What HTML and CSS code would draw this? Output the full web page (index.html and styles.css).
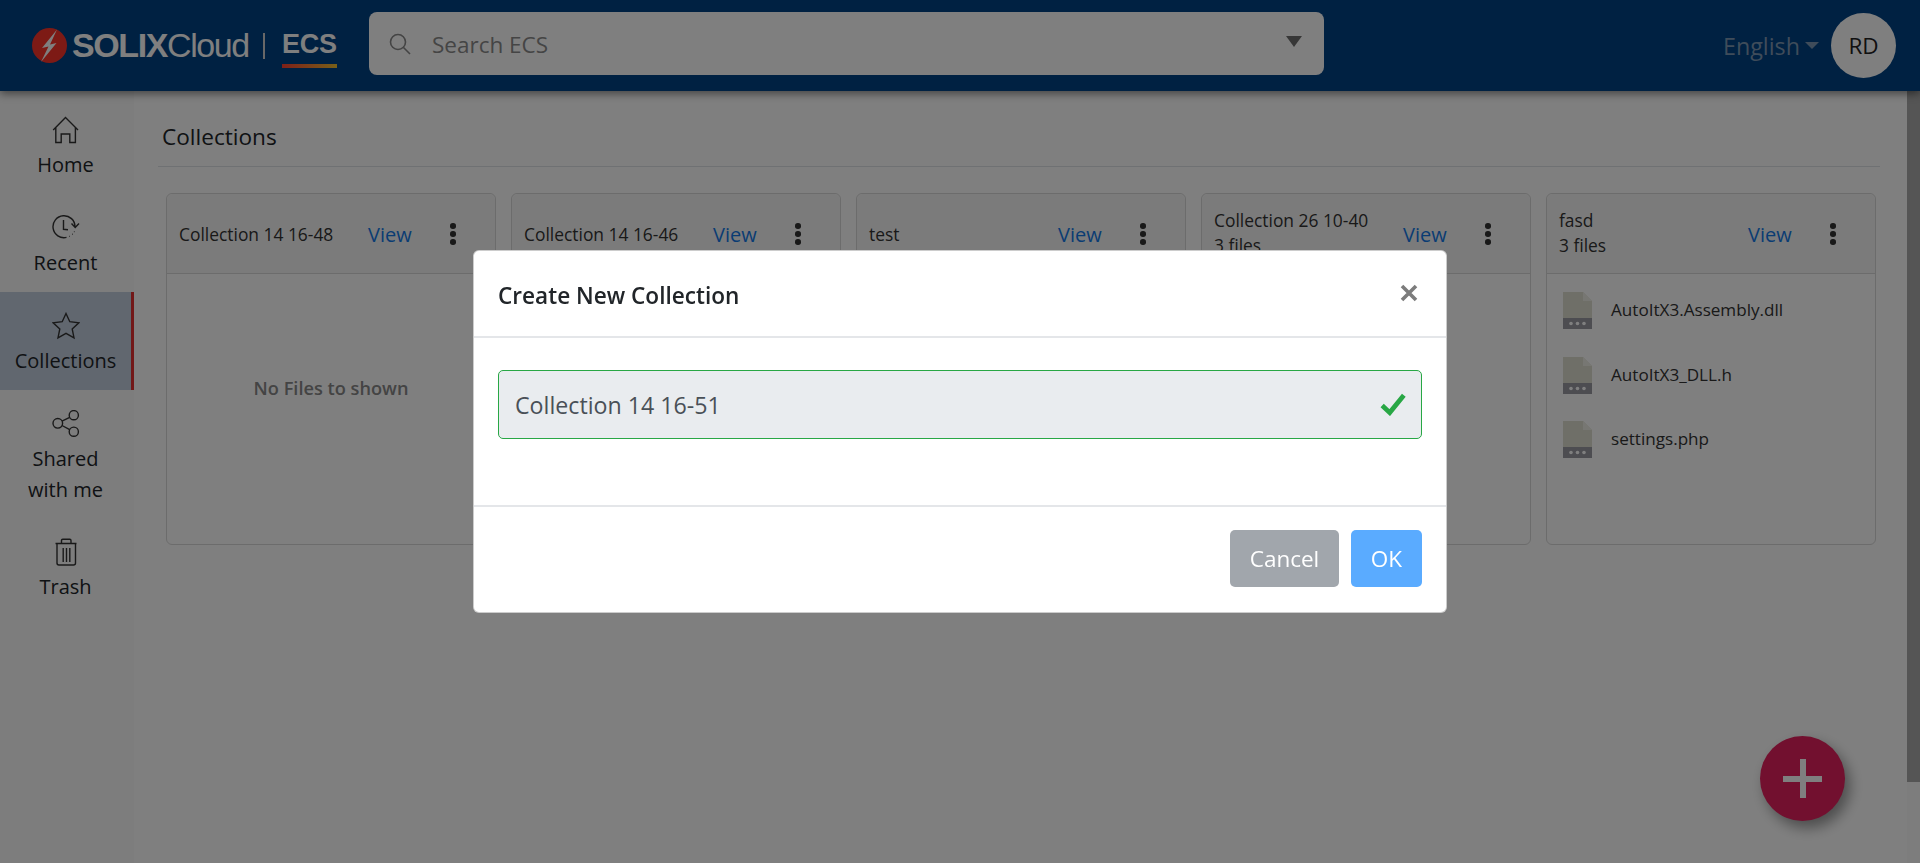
FILE: index.html
```html
<!DOCTYPE html>
<html lang="en">
<head>
    <meta charset="UTF-8">
    <title>Collections</title>
    <link rel="stylesheet" href="styles.css">
</head>
<body>
    <header class="topbar">
        <a class="logo">
            <svg class="logo-mark" viewBox="0 0 35 35">
                <circle cx="17.5" cy="17.5" r="17.5" fill="#fb342a"/>
                <path d="M25 1.5 L10 20 L16.5 18.5 L9 34 L24.5 15 L18 16.5 Z" fill="#fff"/>
            </svg>
            <span class="logo-solix">SOLIX</span><span class="logo-cloud">Cloud</span>
            <span class="logo-sep"></span>
            <span class="logo-ecs">ECS</span>
        </a>
        <div class="search">
            <svg class="search-icon" viewBox="0 0 22 22">
                <circle cx="9" cy="9" r="7.5"/>
                <line x1="14.5" y1="14.5" x2="21" y2="21"/>
            </svg>
            <span class="search-text">Search ECS</span>
            <span class="search-caret"></span>
        </div>
        <div class="lang">English<span class="lang-caret"></span></div>
        <div class="avatar">RD</div>
    </header>

    <div class="layout">
        <nav class="sidebar">
            <a class="nav-item">
                <svg viewBox="0 0 28 28"><path d="M1.2 14 L13.5 1.5 L26 14 M3.8 11.5 V26.5 H9.2 V18 H17.8 V26.5 H23.4 V11.5"/></svg>
                <span>Home</span>
            </a>
            <a class="nav-item">
                <svg viewBox="0 0 28 28"><path d="M14.5 23.4 A11 11 0 1 1 23 12.7 M19.5 9.5 L23.2 13.5 L27 9.5 M11.5 6 V15.3 L16 15.8 M17.3 22.4 h.6 M20 20.2 h.6 M21.9 17.6 h.6"/></svg>
                <span>Recent</span>
            </a>
            <a class="nav-item active">
                <svg viewBox="0 0 28 28"><path d="M14 1.5 L17.8 9.7 L26.8 10.8 L20.2 16.9 L22 25.8 L14 21.4 L6 25.8 L7.8 16.9 L1.2 10.8 L10.2 9.7 Z"/></svg>
                <span>Collections</span>
            </a>
            <a class="nav-item nav-item-tall">
                <svg viewBox="0 0 28 28">
                    <circle cx="5.8" cy="13.3" r="4.8"/><circle cx="21.8" cy="5.2" r="4.6"/><circle cx="21.8" cy="21.7" r="4.6"/>
                    <path d="M10 11.2 L17.7 7.3 M10 15.5 L17.7 19.6"/>
                </svg>
                <span>Shared<br>with me</span>
            </a>
            <a class="nav-item">
                <svg viewBox="0 0 28 28"><path d="M3.5 5.5 H24.5 M9.5 5 V2.5 Q9.5 1.2 10.8 1.2 H17.8 Q19 1.2 19 2.5 V5 M5 5.5 V25 Q5 27 7 27 H21.5 Q23.5 27 23.5 25 V5.5 M11.2 10 V24 M14.5 10 V24 M17.8 10 V24"/></svg>
                <span>Trash</span>
            </a>
        </nav>

        <main class="content">
            <h1 class="page-title">Collections</h1>
            <div class="cards">
                <section class="card">
                    <div class="card-head">
                        <div class="card-name">Collection 14 16-48</div>
                        <a class="card-view">View</a>
                        <span class="dots"><i></i><i></i><i></i></span>
                    </div>
                    <div class="card-empty">No Files to shown</div>
                </section>
                <section class="card">
                    <div class="card-head">
                        <div class="card-name">Collection 14 16-46</div>
                        <a class="card-view">View</a>
                        <span class="dots"><i></i><i></i><i></i></span>
                    </div>
                </section>
                <section class="card">
                    <div class="card-head">
                        <div class="card-name">test</div>
                        <a class="card-view">View</a>
                        <span class="dots"><i></i><i></i><i></i></span>
                    </div>
                </section>
                <section class="card">
                    <div class="card-head">
                        <div class="card-name two-line">Collection 26 10-40<br>3 files</div>
                        <a class="card-view">View</a>
                        <span class="dots"><i></i><i></i><i></i></span>
                    </div>
                </section>
                <section class="card">
                    <div class="card-head">
                        <div class="card-name two-line">fasd<br>3 files</div>
                        <a class="card-view">View</a>
                        <span class="dots"><i></i><i></i><i></i></span>
                    </div>
                    <ul class="files">
                        <li>
                            <svg viewBox="0 0 29 37">
                                <path d="M0 0 H20 L29 9 V26 H0 Z" fill="#dfdfd1"/>
                                <path d="M20 0 L29 9 H20 Z" fill="#efefe6"/>
                                <rect y="26" width="29" height="11" fill="#9a9aa3"/>
                                <circle cx="8" cy="31.5" r="1.8" fill="#fff"/><circle cx="14.5" cy="31.5" r="1.8" fill="#fff"/><circle cx="21" cy="31.5" r="1.8" fill="#fff"/>
                            </svg>
                            <span>AutoItX3.Assembly.dll</span>
                        </li>
                        <li>
                            <svg viewBox="0 0 29 37">
                                <path d="M0 0 H20 L29 9 V26 H0 Z" fill="#dfdfd1"/>
                                <path d="M20 0 L29 9 H20 Z" fill="#efefe6"/>
                                <rect y="26" width="29" height="11" fill="#9a9aa3"/>
                                <circle cx="8" cy="31.5" r="1.8" fill="#fff"/><circle cx="14.5" cy="31.5" r="1.8" fill="#fff"/><circle cx="21" cy="31.5" r="1.8" fill="#fff"/>
                            </svg>
                            <span>AutoItX3_DLL.h</span>
                        </li>
                        <li>
                            <svg viewBox="0 0 29 37">
                                <path d="M0 0 H20 L29 9 V26 H0 Z" fill="#dfdfd1"/>
                                <path d="M20 0 L29 9 H20 Z" fill="#efefe6"/>
                                <rect y="26" width="29" height="11" fill="#9a9aa3"/>
                                <circle cx="8" cy="31.5" r="1.8" fill="#fff"/><circle cx="14.5" cy="31.5" r="1.8" fill="#fff"/><circle cx="21" cy="31.5" r="1.8" fill="#fff"/>
                            </svg>
                            <span>settings.php</span>
                        </li>
                    </ul>
                </section>
            </div>
        </main>

        <div class="scroll-track"><div class="scroll-thumb"></div></div>
    </div>

    <button class="fab"><span class="fab-plus"></span></button>

    <div class="backdrop"></div>
    <div class="modal-wrap">
        <div class="modal">
            <div class="modal-head">
                <h2>Create New Collection</h2>
                <svg class="modal-close" viewBox="0 0 18 18"><path d="M2 2 L16 16 M16 2 L2 16"/></svg>
            </div>
            <div class="modal-body">
                <div class="field">
                    <span>Collection 14 16-51</span>
                    <svg viewBox="0 0 24 21"><path d="M2 11.5 L9 18 L22 2"/></svg>
                </div>
            </div>
            <div class="modal-foot">
                <button class="btn btn-cancel">Cancel</button>
                <button class="btn btn-ok">OK</button>
            </div>
        </div>
    </div>
</body>
</html>
```

FILE: styles.css
```css
*{
    box-sizing: border-box;
}
html,body{
    height: 100%;
}
body{
    margin: 0;
    overflow: hidden;
    background: #fff;
    color: #212529;
    font-family: "Open Sans", "Noto Sans", sans-serif;
    display: flex;
    flex-direction: column;
}

/* top bar */
.topbar{
    height: 91px;
    flex: none;
    background: #004284;
    display: flex;
    align-items: center;
    padding: 0 24px 0 32px;
    box-shadow: 0 3px 8px rgba(0,0,0,.45);
    position: relative;
    z-index: 2;
}
.logo{
    display: flex;
    align-items: center;
    width: 337px;
    color: #fff;
    font-family: "Liberation Sans", sans-serif;
    font-size: 34px;
}
.logo-mark{
    width: 35px;
    height: 35px;
    margin: 0 5px 0 0;
    flex: none;
}
.logo-solix{
    font-weight: 700;
    letter-spacing: -1.4px;
}
.logo-cloud{
    letter-spacing: -1.4px;
}
.logo-sep{
    width: 2px;
    height: 26px;
    background: #d0d0d0;
    margin: 0 17px 0 14px;
}
.logo-ecs{
    font-weight: 700;
    font-size: 27px;
    letter-spacing: -.2px;
    line-height: 30px;
    padding-bottom: 9px;
    background: linear-gradient(90deg,#ff4030,#f0c030) left bottom / 100% 4px no-repeat;
    margin-top: 6px;
}
.search{
    width: 955px;
    height: 63px;
    background: #fff;
    border-radius: 8px;
    display: flex;
    align-items: center;
    padding: 0 22px 0 20px;
    margin-top: -4px;
}
.search-icon{
    width: 22px;
    height: 22px;
    fill: none;
    stroke: #888;
    stroke-width: 1.6;
    flex: none;
}
.search-text{
    margin-left: 21px;
    flex: 1;
    font-size: 22.5px;
    color: #8a8a8a;
    padding-top: 2px;
}
.search-caret{
    width: 0;
    height: 0;
    border-left: 8px solid transparent;
    border-right: 8px solid transparent;
    border-top: 11px solid #6e6e6e;
    margin-top: -4px;
}
.lang{
    margin-left: auto;
    color: #7e99b5;
    font-size: 23.3px;
    display: flex;
    align-items: center;
}
.lang-caret{
    width: 0;
    height: 0;
    margin-left: 5px;
    border-left: 7px solid transparent;
    border-right: 7px solid transparent;
    border-top: 7px solid #7e99b5;
}
.avatar{
    width: 65px;
    height: 65px;
    margin-left: 12px;
    border-radius: 50%;
    background: #fff;
    color: #222;
    font-size: 22.5px;
    display: flex;
    align-items: center;
    justify-content: center;
}

/* sidebar + content */
.layout{
    flex: 1;
    display: flex;
    min-height: 0;
}
.sidebar{
    width: 134px;
    flex: none;
    background: #fafafa;
    padding-top: 5px;
}
.nav-item{
    display: flex;
    flex-direction: column;
    align-items: center;
    padding: 20px 0 14px;
    text-align: center;
    color: #212529;
    font-size: 20px;
    line-height: 31px;
    border-right: 3px solid transparent;
}
.nav-item-tall{
    padding-bottom: 13px;
}
.nav-item svg{
    width: 28px;
    height: 28px;
    margin-bottom: 5px;
    fill: none;
    stroke: #333;
    stroke-width: 1.4;
}
.nav-item.active{
    background: #c3cfdf;
    border-right-color: #e53030;
}
.content{
    flex: 1;
    padding: 24px 27px 0 24px;
}
.page-title{
    margin: 0 0 26px;
    padding: 4px 0 13px 4px;
    font-size: 22.6px;
    font-weight: 400;
    line-height: 35px;
    color: #212529;
    border-bottom: 1px solid #dee2e6;
    height: 52px;
}
.cards{
    display: grid;
    grid-template-columns: repeat(5,330px);
    column-gap: 15px;
    padding-left: 8px;
}
.card{
    height: 352px;
    border: 1px solid #d8d8d8;
    border-radius: 6px;
    display: flex;
    flex-direction: column;
}
.card-head{
    height: 80px;
    flex: none;
    background: #f7f7f7;
    border-bottom: 1px solid #d8d8d8;
    border-radius: 6px 6px 0 0;
    display: flex;
    align-items: center;
    padding: 1px 0 0 12px;
}
.card-name{
    flex: 1;
    font-size: 17.4px;
    line-height: 25px;
    color: #333;
}
.card-name.two-line{
    margin-top: -2px;
}
.card-view{
    width: 82px;
    font-size: 20px;
    color: #1479e6;
}
.dots{
    width: 45px;
    display: flex;
    flex-direction: column;
    gap: 2.5px;
}
.dots i{
    width: 5.5px;
    height: 5.5px;
    border-radius: 50%;
    background: #333;
}
.card-empty{
    flex: 1;
    display: flex;
    align-items: center;
    justify-content: center;
    padding-bottom: 42px;
    font-size: 18.2px;
    font-weight: 600;
    color: #888;
}
.files{
    list-style: none;
    margin: 0;
    padding: 18px 0 0 16px;
}
.files li{
    display: flex;
    height: 64.5px;
    gap: 19px;
}
.files svg{
    width: 29px;
    height: 37px;
    flex: none;
}
.files span{
    font-size: 17.1px;
    line-height: 36px;
    color: #333;
}
.scroll-track{
    width: 13px;
    flex: none;
    background: #fafafa;
}
.scroll-thumb{
    height: 691px;
    background: #aaa;
}
.fab{
    position: fixed;
    left: 1760px;
    top: 736px;
    width: 85px;
    height: 85px;
    padding: 0;
    border: 0;
    border-radius: 50%;
    background: #e4205f;
    box-shadow: 5px 7px 14px rgba(0,0,0,.4);
    display: flex;
    align-items: center;
    justify-content: center;
}
.fab-plus{
    width: 39px;
    height: 39px;
    background:
        linear-gradient(#fff,#fff) center / 39px 6px no-repeat,
        linear-gradient(#fff,#fff) center / 6px 39px no-repeat;
}

/* modal */
.backdrop{
    position: fixed;
    inset: 0;
    background: rgba(0,0,0,.5);
    z-index: 5;
}
.modal-wrap{
    position: fixed;
    inset: 0;
    z-index: 6;
    display: flex;
    align-items: center;
    justify-content: center;
}
.modal{
    width: 974px;
    height: 363px;
    background: #fff;
    border: 1px solid rgba(0,0,0,.2);
    border-radius: 6px;
    display: flex;
    flex-direction: column;
}
.modal-head{
    height: 87px;
    flex: none;
    border-bottom: 2px solid #e4e6e9;
    display: flex;
    align-items: center;
    justify-content: space-between;
    padding: 0 28px 0 24px;
}
.modal-head h2{
    margin: 0;
    padding-top: 3px;
    font-size: 22.6px;
    font-weight: 600;
    color: #212529;
}
.modal-close{
    width: 18px;
    height: 18px;
    fill: none;
    stroke: #7c7c7c;
    stroke-width: 3.6;
    margin-top: -2px;
}
.modal-body{
    height: 169px;
    flex: none;
    padding: 32px 24px 0;
    border-bottom: 2px solid #e4e6e9;
}
.field{
    height: 69px;
    background: #e9ecef;
    border: 1px solid #28a745;
    border-radius: 5px;
    display: flex;
    align-items: center;
    justify-content: space-between;
    padding: 0 15px 0 16px;
    font-size: 23.2px;
    color: #495057;
}
.field svg{
    width: 26px;
    height: 23px;
    fill: none;
    stroke: #28a745;
    stroke-width: 4.4;
}
.modal-foot{
    flex: 1;
    display: flex;
    justify-content: flex-end;
    gap: 12px;
    padding: 23px 24px 0 0;
}
.btn{
    height: 57px;
    border: 0;
    border-radius: 5px;
    color: #fff;
    font-family: inherit;
    font-size: 22.5px;
}
.btn-cancel{
    width: 109px;
    background: #a1a6ac;
}
.btn-ok{
    width: 71px;
    background: #5aabff;
}
```
